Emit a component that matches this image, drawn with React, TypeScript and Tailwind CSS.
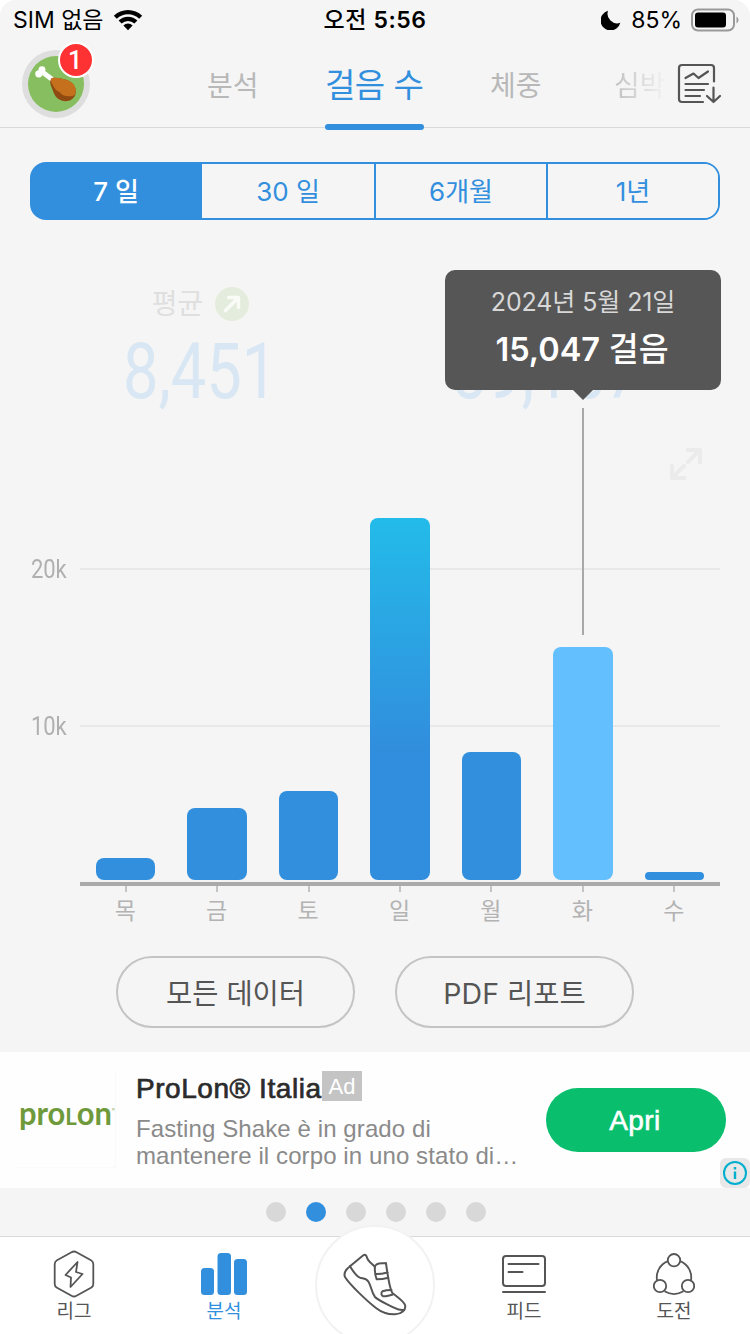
import { clsx } from 'clsx';

const days = [
  { label: '목', height: 22 },
  { label: '금', height: 72 },
  { label: '토', height: 89 },
  { label: '일', height: 362, best: true },
  { label: '월', height: 128 },
  { label: '화', height: 233, selected: true },
  { label: '수', height: 8 },
];

const ranges = ['7 일', '30 일', '6개월', '1년'];

function StatusBar() {
  return (
    <div className="flex h-10 items-center justify-between pl-[13px] pr-[11px] text-[23px] text-black">
      <div className="flex w-[230px] items-center gap-[9px]">
        <span className="whitespace-nowrap">SIM 없음</span>
        <svg width="30" height="22" viewBox="0 0 30 22">
          <path d="M.8 6.8a20.300 20.300 0 0 1 28.400 0l-3 3a16 16 0 0 0-22.400 0z" />
          <path d="M5.600 11.600a13.400 13.400 0 0 1 18.800 0l-3 3a9.200 9.200 0 0 0-12.800 0z" />
          <path d="M10.400 16.400a6.600 6.600 0 0 1 9.200 0L15 21.200z" />
        </svg>
      </div>
      <span className="pr-[2px] font-medium tracking-[0.5px]">
        오전 <span className="font-semibold">5:56</span>
      </span>
      <div className="flex w-[230px] items-center justify-end">
        <svg width="20" height="20" viewBox="0 0 20 20" className="mr-[10px]">
          <path d="M7 .8A10 10 0 1 0 19.300 12.800 9.600 9.600 0 0 1 7 .8z" />
        </svg>
        <span className="mr-[9px]">85%</span>
        <svg width="48" height="24" viewBox="0 0 48 24">
          <rect x="1" y="1.500" width="42" height="21" rx="6" fill="none" stroke="#999" strokeWidth="2" />
          <rect x="4" y="4.500" width="31" height="15" rx="3" />
          <path d="M45.500 8.500q2 1 2 3.500t-2 3.500z" fill="#999" />
        </svg>
      </div>
    </div>
  );
}

function Avatar() {
  return (
    <div className="relative ml-[22px] h-[68px] w-[68px]">
      <svg width="68" height="68" viewBox="0 0 68 68">
        <circle cx="34" cy="34" r="34" fill="#dedede" />
        <circle cx="34" cy="34" r="28" fill="#87be5f" />
        <path d="M19 21l12 9" stroke="#fff" strokeWidth="5" strokeLinecap="round" />
        <circle cx="16.800" cy="23.800" r="3.600" fill="#fff" />
        <circle cx="20" cy="19.600" r="3.400" fill="#fff" />
        <path
          d="M30 28c4-1 10 .5 15 2 6 2 10 8 8.500 14-1.500 6-8 8.500-14 6.500-6-2-7.500-7-9.500-12-1.500-4-3-8 0-10.500z"
          fill="#8f4a12"
        />
        <path
          d="M30 28c4-1 10 .5 15 2 6 2 10 7 8.500 13-.5 2-1.500 2.500-3 3-6 1-11-.5-13-4-3-1-5.500-4-7-7.500-1.500-3-2.500-5-.5-6.500z"
          fill="#c4701c"
        />
      </svg>
      <span className="absolute left-[36px] top-[-8px] flex h-[36px] w-[36px] items-center justify-center rounded-full border-2 border-white bg-[#ff3233] pr-[2px] pt-[3px] font-['Roboto'] text-[25px] font-medium text-white">
        1
      </span>
    </div>
  );
}

function ReportIcon() {
  return (
    <svg
      width="46"
      height="42"
      viewBox="0 0 46 42"
      fill="none"
      stroke="#555"
      strokeWidth="2.200"
      strokeLinecap="round"
      strokeLinejoin="round"
    >
      <path d="M37 18.500V5a3 3 0 0 0-3-3H5a3 3 0 0 0-3 3v31a3 3 0 0 0 3 3h21" />
      <path d="M8.500 15l8-4.500 5 4.500 9.500-6.500M8.500 21h22.500M8.500 27h18.500M8.500 33h14.500" />
      <path d="M36.500 24.500v14.500M30 33l6.500 6 6.500-6" />
    </svg>
  );
}

function Header() {
  return (
    <header className="relative flex h-[88px] items-center border-b border-[#d9d9d9]">
      <Avatar />
      <nav className="flex flex-1 items-center pt-[4px] text-[28px] text-[#b8b8b8]">
        <span className="w-[285px] pl-[117px]">분석</span>
        <span className="ml-[-50px] w-[164px] text-[33px] tracking-[-0.5px] text-[#328fde]">걸음 수</span>
        <span className="w-[124px] pl-[1px]">체중</span>
        <span className="w-[54px] whitespace-nowrap bg-linear-to-r from-[#c0c0c0] to-[#f4f4f4] bg-clip-text pl-[1px] text-transparent">
          심박
        </span>
      </nav>
      <div className="mr-[27px] pt-[1px]">
        <ReportIcon />
      </div>
      <span className="absolute bottom-[-3px] left-[325px] h-[6px] w-[99px] rounded-full bg-[#328fde]" />
    </header>
  );
}

function RangeTabs() {
  return (
    <div className="mx-[30px] mt-[34px] grid h-[58px] grid-cols-[170px_172px_172px_172px] overflow-hidden rounded-[16px] border-2 border-[#328fde] bg-linear-to-r from-[#328fde] from-50% to-[#f5f5f5] to-50% text-[26px] text-[#328fde]">
      {ranges.map((range, i) => (
        <button
          key={range}
          className={clsx(
            'flex items-center justify-center',
            i === 0 ? 'bg-[#328fde] pr-[2px] font-medium text-white' : 'bg-[#f5f5f5]',
            i > 1 && 'border-l-2 border-[#328fde]',
          )}
        >
          {range}
        </button>
      ))}
    </div>
  );
}

function Summary() {
  return (
    <section className="relative mx-[30px] grid h-[210px] grid-cols-2">
      <div className="flex flex-col items-center pr-[4px] pt-[64px]">
        <div className="flex h-[40px] items-center gap-[12px] text-[28px] text-[#dfdfdf]">
          <span>평균</span>
          <svg width="34" height="34" viewBox="0 0 34 34">
            <circle cx="17" cy="17" r="17" fill="#e4eddd" />
            <path
              d="M10.500 23.500L23 11M13.500 10.500H23.500V20.500"
              fill="none"
              stroke="#f9fbf7"
              strokeWidth="3.400"
              strokeLinecap="round"
              strokeLinejoin="round"
            />
          </svg>
        </div>
        <BigNumber value="8,451" />
      </div>
      <div className="flex flex-col items-center pr-[4px] pt-[104px]">
        <BigNumber value="59,157" />
      </div>
      <div className="absolute left-[415px] top-[50px] flex h-[120px] w-[276px] flex-col items-center rounded-[10px] bg-[#565656] pt-[14px]">
        <span className="text-[25px] leading-[36px] tracking-[-0.1px] text-[#d8d8d8]">2024년 5월 21일</span>
        <span className="mt-[8px] pr-[2px] text-[32.500px] font-medium leading-[44px] text-white">
          <span className="font-semibold">15,047</span> 걸음
        </span>
        <svg width="20" height="10" viewBox="0 0 20 10" className="absolute left-[128px] top-[120px]">
          <path d="M0 0h20L10 10z" fill="#565656" />
        </svg>
      </div>
    </section>
  );
}

function BigNumber({ value }: { value: string }) {
  return (
    <span className="mt-px scale-x-[0.82] font-['Roboto'] text-[77px] leading-[94px] text-[#d8e7f3]">
      {value}
    </span>
  );
}

function Chart() {
  return (
    <section className="relative h-[496px] pl-[80px] pr-[30px]">
      <svg
        width="34"
        height="34"
        viewBox="0 0 34 34"
        className="absolute left-[669px] top-[17px]"
        fill="none"
        stroke="#ebebeb"
        strokeWidth="4"
        strokeLinecap="round"
        strokeLinejoin="round"
      >
        <path d="M18.500 3H31v12.500M30 4L19 15M3 18.500V31h12.500M4 30l11-11" />
      </svg>
      <div className="absolute left-0 right-[30px] top-[121px] flex items-center">
        <span className="w-[80px] pr-[13px] text-right">
          <GridLabel text="20k" />
        </span>
        <span className="h-[2px] flex-1 bg-[#e8e8e8]" />
      </div>
      <div className="absolute left-0 right-[30px] top-[278px] flex items-center">
        <span className="w-[80px] pr-[13px] text-right">
          <GridLabel text="10k" />
        </span>
        <span className="h-[2px] flex-1 bg-[#e8e8e8]" />
      </div>
      <div className="absolute left-[582px] top-[-22px] h-[227px] w-[2px] bg-[#a8a8a8]" />
      <div className="relative grid h-[450px] grid-cols-7 items-end">
        {days.map((day) => (
          <div
            key={day.label}
            className={clsx(
              'mx-auto w-[59.400px] rounded-[8px]',
              day.best && 'bg-linear-to-b from-[#22bbe9] to-[#318ddd] to-65%',
              day.selected && 'bg-[#64bfff]',
              !day.best && !day.selected && 'bg-[#328fde]',
            )}
            style={{ height: day.height }}
          />
        ))}
      </div>
      <div className="mt-[2px] h-[4px] bg-[#aaa]" />
      <div className="grid grid-cols-7">
        {days.map((day) => (
          <div key={day.label} className="flex flex-col items-center">
            <span className="h-[6px] w-[2px] bg-[#c4c4c4]" />
            <span className="pr-[1px] pt-px text-[23px] leading-[36px] text-[#b3b3b3]">{day.label}</span>
          </div>
        ))}
      </div>
    </section>
  );
}

function GridLabel({ text }: { text: string }) {
  return (
    <span className="inline-block origin-right scale-x-[0.88] pt-px font-['Roboto'] text-[25px] leading-[35px] text-[#b0b0b0]">
      {text}
    </span>
  );
}

function AdBanner() {
  return (
    <section className="relative flex h-[136px] bg-[#fefefe]">
      <div className="ml-[18px] mt-[20px] h-[96px] w-[98px] border-b border-r border-[#fafafa]">
        <svg width="98" height="96" viewBox="0 0 98 96" fill="#6f9a3c">
          <text
            x="1"
            y="53"
            fontFamily="Lato, sans-serif"
            fontWeight="700"
            fontSize="32"
            textLength="93"
            lengthAdjust="spacingAndGlyphs"
          >
            pro<tspan fontSize="23">L</tspan>on
          </text>
          <text x="94" y="39" fontSize="4">
            ®
          </text>
        </svg>
      </div>
      <div className="ml-[20px] flex w-[410px] flex-col pt-[18px] font-['Liberation_Sans']">
        <div className="flex items-center">
          <span className="w-[186px] whitespace-nowrap pt-px text-[28px] leading-[35px] tracking-[0.55px] text-[#2b2b2b] [-webkit-text-stroke:0.7px_#2b2b2b]">
            ProLon® Italia
          </span>
          <span className="mb-[4px] flex h-[30px] w-[40px] items-center justify-center bg-[#c4c4c4] text-[22px] text-white">
            Ad
          </span>
        </div>
        <p className="mt-[9px] whitespace-nowrap text-[24px] leading-[27px] tracking-[0.1px] text-[#8a8a8a]">
          Fasting Shake è in grado di
          <br />
          mantenere il corpo in uno stato di…
        </p>
      </div>
      <button className="mt-[36px] h-[64px] w-[180px] rounded-full bg-[#09bf6d] pr-[2px] pt-[2px] font-['Liberation_Sans'] text-[28px] tracking-[0.4px] text-white [-webkit-text-stroke:0.6px_white]">
        Apri
      </button>
      <span className="absolute bottom-0 right-0 flex h-[30px] w-[30px] items-center justify-center rounded-[6px] bg-[#e8e8e8]">
        <svg width="24" height="24" viewBox="0 0 24 24">
          <circle cx="12" cy="12" r="11" fill="none" stroke="#00aecd" strokeWidth="2" />
          <path d="M10.800 6h2.400v2.400h-2.400zM10.800 10.500h2.400V18h-2.400z" fill="#00aecd" />
        </svg>
      </span>
    </section>
  );
}

function LeagueIcon() {
  return (
    <svg width="42" height="48" viewBox="0 0 42 48" fill="none" stroke="#555" strokeWidth="1.800" strokeLinejoin="round">
      <path d="M18.500 2.200a5 5 0 0 1 5 0l14.500 8a4.500 4.500 0 0 1 2.300 4v19.600a4.500 4.500 0 0 1-2.300 4l-14.500 8a5 5 0 0 1-5 0l-14.500-8a4.500 4.500 0 0 1-2.300-4V14.200a4.500 4.500 0 0 1 2.300-4z" />
      <path d="M24.500 12L12.500 25l5.500 2.500-.5 9.500L29.500 24l-6.500-2z" />
    </svg>
  );
}

function StatsIcon() {
  return (
    <svg width="46" height="42" viewBox="0 0 46 42" fill="#328fde">
      <rect x="0" y="15" width="13" height="27" rx="3.500" />
      <rect x="16.500" y="0" width="13.500" height="42" rx="3.500" />
      <rect x="33" y="6" width="13" height="36" rx="3.500" />
    </svg>
  );
}

function FeedIcon() {
  return (
    <svg width="46" height="40" viewBox="0 0 46 40" fill="none" stroke="#555" strokeWidth="2" strokeLinecap="round">
      <rect x="2" y="2" width="42" height="30" rx="3" />
      <path d="M7.500 10h30M7.500 18h14M2 38h42" />
    </svg>
  );
}

function ChallengeIcon() {
  return (
    <svg width="42" height="42" viewBox="0 0 42 42" fill="none" stroke="#555" strokeWidth="1.800">
      <circle cx="21" cy="7.200" r="6.200" />
      <circle cx="7" cy="33" r="6.200" />
      <circle cx="35" cy="33" r="6.200" />
      <path d="M14.800 8.200A17.500 17.500 0 0 0 4 27.300M27.200 8.200A17.500 17.500 0 0 1 38 27.300M11.500 38.300a19 19 0 0 0 19 0" />
    </svg>
  );
}

function ShoeIcon() {
  return (
    <svg
      width="64"
      height="64"
      viewBox="0 0 64 64"
      fill="none"
      stroke="#555"
      strokeWidth="2"
      strokeLinecap="round"
      strokeLinejoin="round"
    >
      <path d="M7 13.300L20 2.500c2-1.300 3.200-.6 3.800 1.500 1 4.500 5 6.500 8 9.800" />
      <path d="M7 13.300c-4 3-7 6-5 10.700C7 32 24 48 33 55c7 5.500 14 6.500 19 6.300 6-.2 11.500-4.300 10-9.300-1.500-4-7-7.500-12.700-12-3-5-5-20-6.300-29.700" />
      <path d="M7 13.300c3 5 6 9.700 10 11.400 3 1 6 0 8.500 4 3 5 3 11 6.500 15.300 3 3.500 13 7.500 19 10.700 3.500 1.800 6 2.800 10 2.300" />
      <path d="M32 13c2-3 5-3 11-2.700M32 13c-.5 5 0 9 1.700 13.300 4 0 8-.6 11.600-1.600M32.500 21c4 .2 8-.5 12-1.500" />
      <path d="M48.500 37c-3.500 0-6.500.4-9 1.300-2 1.500-1 4.500.8 5 3 0 6-1 9-1.500" />
    </svg>
  );
}

const navItems = [
  { label: '리그', icon: <LeagueIcon /> },
  { label: '분석', icon: <StatsIcon />, active: true },
  null,
  { label: '피드', icon: <FeedIcon /> },
  { label: '도전', icon: <ChallengeIcon /> },
];

function BottomNav() {
  return (
    <nav className="relative grid h-[98px] grid-cols-5 border-t border-[#d9d9d9] bg-white">
      {navItems.map((item, i) =>
        item ? (
          <div
            key={item.label}
            className={clsx(
              'flex flex-col items-center pr-[2px] pt-[12px] text-[19px] leading-[26px]',
              item.active ? 'text-[#328fde]' : 'text-[#555]',
            )}
          >
            <span className="flex h-[50px] items-center">{item.icon}</span>
            {item.label}
          </div>
        ) : (
          <div key={i} />
        ),
      )}
      <div className="absolute bottom-0 left-[315px] h-[109px] w-[120px] overflow-hidden">
        <div className="flex h-[120px] w-[120px] items-center justify-center rounded-full border-2 border-[#f2f2f2] bg-white">
          <ShoeIcon />
        </div>
      </div>
    </nav>
  );
}

export default function App() {
  return (
    <div className="h-[1334px] w-[750px] overflow-hidden bg-white font-['Inter','Noto_Sans_CJK_KR',sans-serif]">
      <main className="flex h-full flex-col rounded-t-[16px] bg-[#f5f5f5]">
        <StatusBar />
        <Header />
        <RangeTabs />
        <Summary />
        <Chart />
        <div className="mt-[30px] flex h-[72px] justify-center gap-[40px] text-[28.500px] text-[#555]">
          <button className="w-[239px] rounded-full border-2 border-[#c4c4c4] pt-[4px]">모든 데이터</button>
          <button className="w-[239px] rounded-full border-2 border-[#c4c4c4] pt-[4px]">PDF 리포트</button>
        </div>
        <div className="mt-[24px]">
          <AdBanner />
        </div>
        <div className="flex h-[48px] items-center justify-center gap-[20px] pl-[2px]">
          {[0, 1, 2, 3, 4, 5].map((i) => (
            <span key={i} className={clsx('h-5 w-5 rounded-full', i === 1 ? 'bg-[#328fde]' : 'bg-[#d8d8d8]')} />
          ))}
        </div>
        <BottomNav />
      </main>
    </div>
  );
}
